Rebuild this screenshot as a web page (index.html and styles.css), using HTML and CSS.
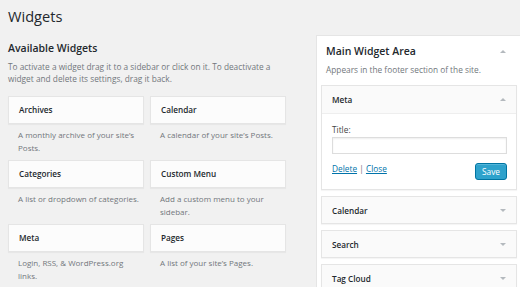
FILE: index.html
```html
<!DOCTYPE html>
<html>
<head>
<meta charset="utf-8">
<link rel="stylesheet" href="styles.css">
</head>
<body>
<div class="wrap">
  <h1 class="page-title">Widgets</h1>
  <div class="cols">
    <div class="available">
      <h2 class="section-title">Available Widgets</h2>
      <p class="intro">To activate a widget drag it to a sidebar or click on it. To deactivate a widget and delete its settings, drag it back.</p>
      <div class="grid">
        <div class="item"><div class="box">Archives</div><p class="desc">A monthly archive of your site’s Posts.</p></div>
        <div class="item"><div class="box">Calendar</div><p class="desc">A calendar of your site’s Posts.</p></div>
        <div class="item"><div class="box">Categories</div><p class="desc">A list or dropdown of categories.</p></div>
        <div class="item"><div class="box">Custom Menu</div><p class="desc">Add a custom menu to your sidebar.</p></div>
        <div class="item"><div class="box">Meta</div><p class="desc">Login, RSS, &amp; WordPress.org links.</p></div>
        <div class="item"><div class="box">Pages</div><p class="desc">A list of your site’s Pages.</p></div>
      </div>
    </div>
    <div class="sidebar">
      <div class="sidebar-head">
        <h2 class="section-title">Main Widget Area</h2>
        <svg class="arrow" width="6" height="3" viewBox="0 0 6 3"><path d="M0 3 L3 0 L6 3 Z" fill="#b4b9be"/></svg>
      </div>
      <p class="sidebar-desc">Appears in the footer section of the site.</p>
      <div class="widget open">
        <div class="widget-top">
          <span>Meta</span>
          <svg class="arrow" width="6" height="3" viewBox="0 0 6 3"><path d="M0 3 L3 0 L6 3 Z" fill="#b4b9be"/></svg>
        </div>
        <div class="widget-body">
          <label class="field-label">Title:</label>
          <div class="input"></div>
          <div class="actions">
            <span class="links"><a href="#">Delete</a> | <a href="#">Close</a></span>
            <button class="save">Save</button>
          </div>
        </div>
      </div>
      <div class="widget">
        <div class="widget-top"><span>Calendar</span><svg class="arrow" width="6" height="3" viewBox="0 0 6 3"><path d="M0 0 L6 0 L3 3 Z" fill="#b4b9be"/></svg></div>
      </div>
      <div class="widget">
        <div class="widget-top"><span>Search</span><svg class="arrow" width="6" height="3" viewBox="0 0 6 3"><path d="M0 0 L6 0 L3 3 Z" fill="#b4b9be"/></svg></div>
      </div>
      <div class="widget">
        <div class="widget-top"><span>Tag Cloud</span><svg class="arrow" width="6" height="3" viewBox="0 0 6 3"><path d="M0 0 L6 0 L3 3 Z" fill="#b4b9be"/></svg></div>
      </div>
    </div>
  </div>
</div>
</body>
</html>
```

FILE: styles.css
```css
html, body {
  margin: 0;
  padding: 0;
  background: #f1f1f1;
  overflow: hidden;
  width: 520px;
  height: 287px;
}
body {
  font-family: "Open Sans", "DejaVu Sans", sans-serif;
  color: #23282d;
}
.wrap {
  padding: 6px 0 0 8px;
  height: 281px;
  overflow: hidden;
}
.page-title {
  margin: 0;
  font-size: 14.6px;
  line-height: 20px;
  font-weight: 400;
  color: #23282d;
}
.cols {
  display: flex;
  gap: 30px;
  margin-top: 9px;
  align-items: flex-start;
}
.available {
  width: 278px;
  flex: none;
}
.section-title {
  margin: 0;
  font-size: 10.5px;
  line-height: 14px;
  font-weight: 600;
  color: #23282d;
}
.available .section-title {
  margin-top: 6px;
}
.intro {
  margin: 6px 0 0;
  font-size: 8.3px;
  line-height: 12px;
  color: #72777c;
}
.grid {
  margin-top: 11px;
  display: grid;
  grid-template-columns: 136px 136px;
  column-gap: 6px;
}
.item {
  height: 64px;
}
.box {
  height: 26px;
  line-height: 26px;
  border: 1px solid #e5e5e5;
  background: #fcfcfc;
  box-shadow: 0 1px 1px rgba(0,0,0,0.04);
  padding: 0 10px;
  font-size: 8.2px;
  font-weight: 600;
  color: #23282d;
}
.desc {
  margin: 0;
  padding: 5px 4px 0 10px;
  font-size: 8px;
  line-height: 12.5px;
  color: #72777c;
}
.sidebar {
  flex: none;
  width: 196px;
  background: #fff;
  border: 1px solid #e5e5e5;
  padding: 0 4px 20px 4px;
}
.sidebar-head {
  display: flex;
  justify-content: space-between;
  align-items: center;
  padding: 8px 11px 0 5px;
}
.sidebar-desc {
  margin: 6px 0 0 5px;
  font-size: 8.3px;
  line-height: 12px;
  color: #72777c;
}
.widget {
  border: 1px solid #e5e5e5;
  background: #fafafa;
  box-shadow: 0 1px 1px rgba(0,0,0,0.04);
  margin-top: 6px;
}
.sidebar-desc + .widget {
  margin-top: 9px;
}
.widget-top {
  height: 26px;
  display: flex;
  align-items: center;
  justify-content: space-between;
  padding: 0 10px 0 10px;
  font-size: 8.2px;
  font-weight: 600;
  color: #23282d;
}
.widget.open .widget-top {
  height: 27px;
  border-bottom: 1px solid #eee;
}
.widget-body {
  background: #fff;
  padding: 10px 9px 9px 10px;
}
.field-label {
  display: block;
  font-size: 8.3px;
  line-height: 12px;
  color: #444;
}
.input {
  margin-top: 1px;
  height: 15px;
  border: 1px solid #ddd;
  background: #fff;
  box-shadow: inset 0 1px 2px rgba(0,0,0,0.07);
}
.actions {
  margin-top: 9px;
  display: flex;
  justify-content: space-between;
  align-items: flex-start;
}
.links {
  font-size: 8.3px;
  line-height: 12px;
  color: #72777c;
}
.links a {
  color: #0073aa;
  text-decoration: underline;
}
.save {
  width: 32px;
  height: 17px;
  padding: 0;
  margin-top: 0;
  border: 1px solid #0074a2;
  border-radius: 3px;
  background: #2ea2cc;
  color: #fff;
  font-family: "Open Sans", "DejaVu Sans", sans-serif;
  font-size: 8.3px;
  box-shadow: inset 0 1px 0 rgba(120,200,230,0.5);
}
```
